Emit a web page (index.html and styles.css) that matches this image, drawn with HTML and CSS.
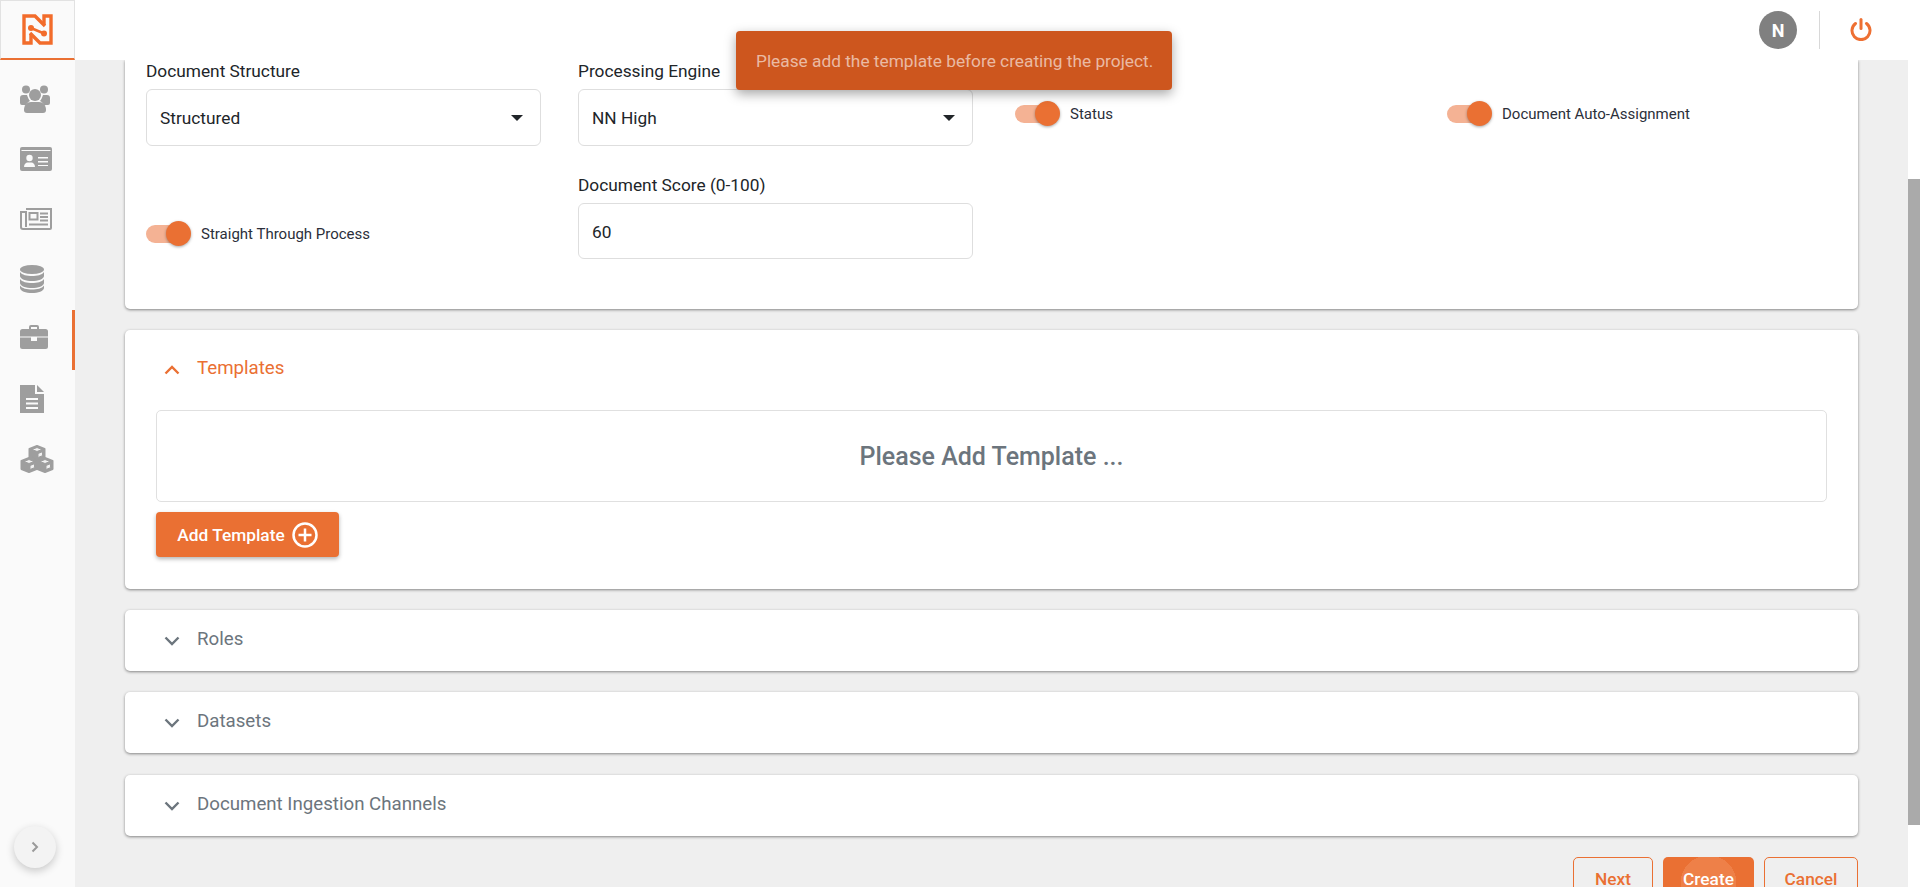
FILE: index.html
```html
<!DOCTYPE html>
<html lang="en">
<head>
<meta charset="UTF-8">
<meta name="viewport" content="width=device-width, initial-scale=1.0">
<title>Create Project</title>
<link rel="stylesheet" href="styles.css">
</head>
<body>

<div class="app">
  <aside class="sidebar">
    <div class="logo">
      <svg width="31" height="31" viewBox="0 0 31 31" fill="none" stroke="#f26c2b" stroke-width="3.4">
        <path d="M9 20v9H2V2h11l10 10"/>
        <path d="M22 11V2h7v27H18L8 19"/>
        <path d="M9 14l13 5.500" stroke-width="2.500"/>
        <circle cx="9" cy="14" r="3" fill="#f26c2b" stroke="none"/>
        <circle cx="22" cy="19.500" r="3" fill="#f26c2b" stroke="none"/>
      </svg>
    </div>
    <nav class="nav">
      <a class="nav-item">
        <svg width="30" height="28" viewBox="0 0 30 28" fill="#9e9e9e">
          <circle cx="6" cy="4.500" r="4"/><circle cx="24" cy="4.500" r="4"/><circle cx="15" cy="10" r="6"/>
          <path d="M0 13a3 3 0 0 1 3-3h4c1 3 2 5 3 6-2 1-3 2-4 4H2a2 2 0 0 1-2-2zM30 13a3 3 0 0 0-3-3h-4c-1 3-2 5-3 6 2 1 3 2 4 4h4a2 2 0 0 0 2-2z"/>
          <path d="M4 25c0-5 3-8 7-8h8c4 0 7 3 7 8a3 3 0 0 1-3 3H7a3 3 0 0 1-3-3z"/>
        </svg>
      </a>
      <a class="nav-item">
        <svg width="32" height="24" viewBox="0 0 32 24">
          <rect width="32" height="24" rx="2" fill="#9e9e9e"/>
          <rect x="1.500" y="3" width="29" height="1" fill="#fafafa"/>
          <circle cx="9.500" cy="11" r="3.200" fill="#fafafa"/>
          <path d="M4 20c0-3 2-4.500 3.500-4.500h4c1.500 0 3.500 1.500 3.500 4.500z" fill="#fafafa"/>
          <path d="M18 10h10v1.500H18zM18 14h10v1.500H18zM18 18h10v1H18z" fill="#fafafa"/>
        </svg>
      </a>
      <a class="nav-item">
        <svg width="32" height="22" viewBox="0 0 32 22" fill="none" stroke="#9e9e9e" stroke-width="2">
          <path d="M6 1h25v19a1 1 0 0 1-1 1H3a2 2 0 0 1-2-2V4h5v15"/>
          <rect x="9.500" y="5" width="8" height="6.500" stroke-width="2"/>
          <path d="M20 5.500h8M20 9h8M20 12.500h8M9 16.500h19" stroke-width="1.800"/>
        </svg>
      </a>
      <a class="nav-item">
        <svg width="24" height="28" viewBox="0 0 24 28" fill="#9e9e9e">
          <ellipse cx="12" cy="4.500" rx="12" ry="4.500"/>
          <path d="M0 7c2 3 7 4 12 4s10-1 12-4v4c0 3-6 5-12 5S0 14 0 11z"/>
          <path d="M0 14c2 3 7 4 12 4s10-1 12-4v4c0 3-6 5-12 5S0 21 0 18z"/>
          <path d="M0 20.500c2 3 7 4 12 4s10-1 12-4V23c0 3-6 5-12 5S0 26 0 23z"/>
        </svg>
      </a>
      <a class="nav-item active">
        <svg width="28" height="24" viewBox="0 0 28 24" fill="#9e9e9e">
          <path d="M9 4V2a2 2 0 0 1 2-2h6a2 2 0 0 1 2 2v2h6.500A2.500 2.500 0 0 1 28 6.500v5H0v-5A2.500 2.500 0 0 1 2.500 4zM11 2v2h6V2z" fill-rule="evenodd"/>
          <path d="M0 12.500h11v3.500h6v-3.500h11v9a2.500 2.500 0 0 1-2.500 2.500h-23A2.500 2.500 0 0 1 0 21.500z"/>
        </svg>
      </a>
      <a class="nav-item">
        <svg width="24" height="28" viewBox="0 0 24 28" fill="#9e9e9e">
          <path d="M0 0h15v9h9v19H0z"/>
          <path d="M17 0l7 7h-7z"/>
          <path d="M6 13h12v2H6zM6 17.500h12v2H6zM6 22h12v2H6z" fill="#fafafa"/>
        </svg>
      </a>
      <a class="nav-item">
        <svg width="34" height="28" viewBox="0 0 34 28" stroke="#9e9e9e" stroke-width="2" stroke-linejoin="round">
          <g fill="#9e9e9e"><path d="M17 1l7.500 3v8L17 15l-7.500-3V4z"/><path d="M9 13l7.500 3v8L9 27l-7.500-3v-8z"/><path d="M25 13l7.500 3v8L25 27l-7.500-3v-8z"/></g>
          <g fill="#f1f1f1" stroke-width="1"><path d="M17 2.500l5 2-5 2-5-2zM9 14.500l5 2-5 2-5-2zM25 14.500l5 2-5 2-5-2z"/><path d="M18 8.500l4.500-1.800v4L18 12.500zM10 20.500l4.500-1.800v4L10 24.500zM26 20.500l4.500-1.800v4L26 24.500z"/></g>
        </svg>
      </a>
    </nav>
    <button class="collapse-btn">
      <svg width="10" height="12" viewBox="0 0 10 12" fill="none" stroke="#9a9a9a" stroke-width="2"><path d="M2.500 1.500L7 6l-4.500 4.500"/></svg>
    </button>
  </aside>

  <div class="right">
    <header class="topbar">
      <div class="avatar">N</div>
      <div class="divider"></div>
      <svg class="power" width="24" height="24" viewBox="0 0 24 24" fill="none" stroke="#ee7033" stroke-width="3" stroke-linecap="round">
        <path d="M12 2.500v9"/>
        <path d="M6.500 6.500a9 9 0 1 0 11 0"/>
      </svg>
    </header>

    <div class="body-row">
      <main class="main">
        <section class="card form-card">
          <div class="form-grid">
            <div class="field">
              <label class="field-label">Document Structure</label>
              <div class="select">Structured<span class="caret"></span></div>
            </div>
            <div class="field">
              <label class="field-label">Processing Engine</label>
              <div class="select">NN High<span class="caret"></span></div>
            </div>
            <div class="toggle-cell status-cell">
              <span class="toggle"><span class="knob"></span></span>
              <span class="toggle-label">Status</span>
            </div>
            <div class="toggle-cell auto-cell">
              <span class="toggle"><span class="knob"></span></span>
              <span class="toggle-label">Document Auto-Assignment</span>
            </div>
            <div class="toggle-cell stp-cell">
              <span class="toggle"><span class="knob"></span></span>
              <span class="toggle-label">Straight Through Process</span>
            </div>
            <div class="field">
              <label class="field-label">Document Score (0-100)</label>
              <div class="input">60</div>
            </div>
          </div>
        </section>

        <section class="card templates-card">
          <div class="panel-head">
            <svg class="chev" width="16" height="10" viewBox="0 0 16 10" fill="none" stroke="#ea7033" stroke-width="2.400"><path d="M1.500 8.500L8 2l6.500 6.500"/></svg>
            <span>Templates</span>
          </div>
          <div class="empty-box">Please Add Template ...</div>
          <button class="btn-add">Add Template
            <svg width="26" height="26" viewBox="0 0 26 26" fill="none" stroke="#fff" stroke-width="2.500"><circle cx="13" cy="13" r="11.500"/><path d="M13 6.500v13M6.500 13h13"/></svg>
          </button>
        </section>

        <section class="card panel roles">
          <div class="panel-head">
            <svg class="chev" width="16" height="10" viewBox="0 0 16 10" fill="none" stroke="#6c757d" stroke-width="2.400"><path d="M1.500 1.500L8 8l6.500-6.500"/></svg>
            <span>Roles</span>
          </div>
        </section>
        <section class="card panel datasets">
          <div class="panel-head">
            <svg class="chev" width="16" height="10" viewBox="0 0 16 10" fill="none" stroke="#6c757d" stroke-width="2.400"><path d="M1.500 1.500L8 8l6.500-6.500"/></svg>
            <span>Datasets</span>
          </div>
        </section>
        <section class="card panel ingestion">
          <div class="panel-head">
            <svg class="chev" width="16" height="10" viewBox="0 0 16 10" fill="none" stroke="#6c757d" stroke-width="2.400"><path d="M1.500 1.500L8 8l6.500-6.500"/></svg>
            <span>Document Ingestion Channels</span>
          </div>
        </section>

        <div class="actions">
          <button class="btn-outline next">Next</button>
          <button class="btn-solid">Create</button>
          <button class="btn-outline cancel">Cancel</button>
        </div>
      </main>
      <div class="scrollbar"><div class="thumb"></div></div>
    </div>
  </div>
</div>

<div class="toast">Please add the template before creating the project.</div>

</body>
</html>
```

FILE: styles.css
```css
html, body {
  margin: 0;
  height: 100%;
  overflow: hidden;
}
body {
  font-family: 'Roboto', 'Liberation Sans', sans-serif;
  color: #212529;
  background-color: #fff;
}
.app {
  display: flex;
  height: 887px;
}

/* sidebar */
.sidebar {
  width: 75px;
  flex: none;
  display: flex;
  flex-direction: column;
  background-color: #fafafa;
}
.logo {
  height: 60px;
  box-sizing: border-box;
  display: flex;
  align-items: center;
  justify-content: center;
  border: 1px solid #e2e2e2;
  border-bottom: 2px solid #ea7033;
  padding-bottom: 1px;
}
.nav {
  display: flex;
  flex-direction: column;
  padding-top: 10px;
}
.nav-item {
  height: 60px;
  box-sizing: border-box;
  display: flex;
  align-items: center;
  padding-left: 20px;
}
.nav-item svg {
  margin-bottom: 2px;
}
.nav-item.active {
  border-right: 3px solid #ea7033;
}
.nav-item.active svg {
  margin-bottom: 6px;
}
.collapse-btn {
  margin: auto 0 19px 14px;
  width: 42px;
  height: 42px;
  border: none;
  border-radius: 50%;
  background-color: #f3f3f3;
  box-shadow: 0 3px 8px rgba(0, 0, 0, 0.2);
  display: flex;
  align-items: center;
  justify-content: center;
  padding: 0;
}

/* header */
.right {
  flex: 1;
  min-width: 0;
  display: flex;
  flex-direction: column;
}
.topbar {
  height: 60px;
  flex: none;
  display: flex;
  align-items: center;
  justify-content: flex-end;
  background-color: #fff;
  padding-right: 47px;
}
.avatar {
  width: 38px;
  height: 38px;
  border-radius: 50%;
  background-color: #808080;
  color: #fff;
  font-weight: 700;
  font-size: 18px;
  display: flex;
  align-items: center;
  justify-content: center;
}
.divider {
  width: 1px;
  height: 38px;
  background-color: #d8d8d8;
  margin: 0 29px 0 22px;
}
.power {
  margin-top: -2px;
}

/* content */
.body-row {
  flex: 1;
  min-height: 0;
  display: flex;
}
.main {
  flex: 1;
  min-width: 0;
  overflow: hidden;
  background-color: #efefef;
  padding: 0 50px;
}
.scrollbar {
  width: 12px;
  flex: none;
  background-color: #fff;
}
.thumb {
  margin-top: 119px;
  height: 646px;
  background-color: #aaa;
}
.card {
  background-color: #fff;
  border-radius: 5px;
  box-shadow: 0 1px 3px rgba(0, 0, 0, 0.45);
}
.form-card {
  border-radius: 0 0 5px 5px;
  padding: 0 21px 50px;
  margin-bottom: 21px;
}
.form-grid {
  display: grid;
  grid-template-columns: repeat(4, 432px);
  grid-template-rows: 86px 85px;
  row-gap: 28px;
}
.field {
  width: 395px;
  display: flex;
  flex-direction: column;
}
.field-label {
  font-size: 17.3px;
  line-height: 24px;
  margin: -1px 0 6px;
}
.select, .input {
  box-sizing: border-box;
  flex: 1;
  display: flex;
  align-items: center;
  justify-content: space-between;
  border: 1px solid #dedede;
  border-radius: 6px;
  padding: 1px 17px 0 13px;
  font-size: 17.3px;
}
.caret {
  width: 0;
  height: 0;
  border-left: 6.5px solid transparent;
  border-right: 6.5px solid transparent;
  border-top: 6.5px solid #212529;
}
.toggle-cell {
  display: flex;
  align-items: center;
  font-size: 15px;
}
.status-cell {
  padding: 21px 0 0 5px;
}
.auto-cell {
  padding: 21px 0 0 5px;
}
.stp-cell {
  padding-top: 35px;
}
.toggle {
  position: relative;
  width: 38px;
  height: 18px;
  border-radius: 9px;
  background-color: #f4b294;
  margin-right: 17px;
  flex: none;
}
.knob {
  position: absolute;
  left: 20px;
  top: -4px;
  width: 25px;
  height: 25px;
  border-radius: 50%;
  background-color: #ea7033;
  box-shadow: 0 1px 3px rgba(0, 0, 0, 0.35);
}
.toggle-label {
  color: #2b2f3a;
}

/* panels */
.templates-card {
  height: 259px;
  padding: 0 31px;
  margin-bottom: 21px;
  box-sizing: border-box;
}
.panel-head {
  display: flex;
  align-items: center;
  font-size: 18.7px;
  color: #6c757d;
  height: 100%;
  padding-left: 8px;
}
.panel-head span {
  margin-bottom: 4px;
}
.templates-card .panel-head {
  height: 80px;
  color: #ea7033;
}
.chev {
  margin-right: 17px;
}
.empty-box {
  height: 92px;
  box-sizing: border-box;
  border: 1px solid #e0e0e0;
  border-radius: 5px;
  display: flex;
  align-items: center;
  justify-content: center;
  font-size: 25px;
  font-weight: 500;
  color: #6c757d;
  margin-bottom: 10px;
}
.btn-add {
  width: 183px;
  height: 45px;
  display: flex;
  align-items: center;
  justify-content: center;
  gap: 7px;
  padding: 0;
  border: none;
  border-radius: 4px;
  background-color: #ea7033;
  color: #fff;
  font-family: inherit;
  font-size: 17.3px;
  font-weight: 500;
  box-shadow: 0 2px 4px rgba(0, 0, 0, 0.3);
}
.panel {
  height: 62px;
  padding: 0 31px;
  margin-bottom: 21px;
}
.roles {
  height: 61px;
}
.datasets {
  height: 61px;
  margin-bottom: 22px;
}
.ingestion {
  height: 61px;
}

/* buttons at the bottom */
.actions {
  display: flex;
  justify-content: flex-end;
  gap: 10px;
}
.actions button {
  height: 44px;
  box-sizing: border-box;
  border-radius: 5px;
  font-family: inherit;
  font-size: 17.3px;
  font-weight: 500;
  padding: 0;
}
.btn-outline {
  background-color: transparent;
  border: 1px solid #ea7033;
  color: #ea7033;
}
.next {
  width: 80px;
}
.cancel {
  width: 94px;
}
.actions .btn-solid {
  width: 91px;
  border: none;
  color: #fff;
  background: radial-gradient(circle 28px at 50% 60%, #ee8048 100%, transparent 100%), #ea7033;
}

/* toast */
.toast {
  position: absolute;
  left: 736px;
  top: 31px;
  width: 436px;
  height: 59px;
  box-sizing: border-box;
  padding: 0 20px;
  display: flex;
  align-items: center;
  white-space: nowrap;
  background-color: #cd561e;
  color: rgba(255, 255, 255, 0.6);
  font-size: 17.3px;
  border-radius: 4px;
  box-shadow: 0 4px 12px rgba(0, 0, 0, 0.35);
}
```
